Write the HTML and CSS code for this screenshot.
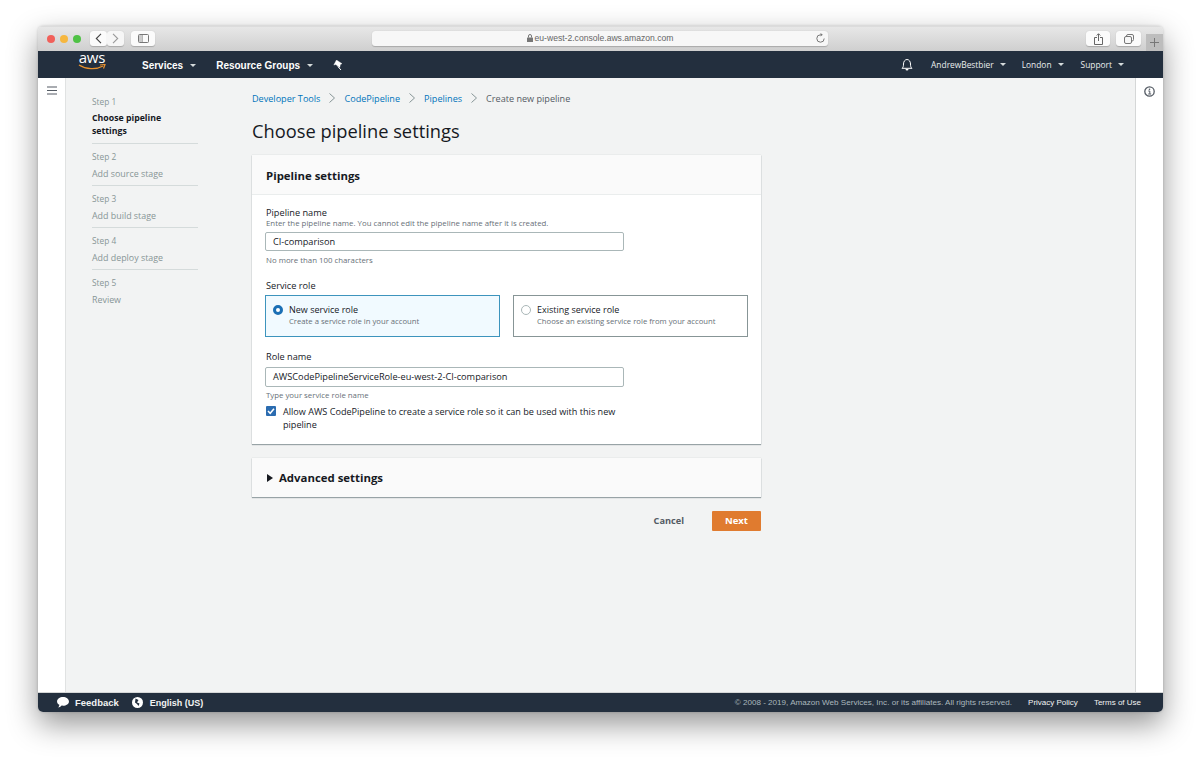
FILE: index.html
```html
<!DOCTYPE html>
<html lang="en">
<head>
<meta charset="utf-8">
<title>Choose pipeline settings</title>
<link rel="stylesheet" href="styles.css">
</head>
<body>
<div class="window">
  <header class="titlebar">
    <div class="lights"><i class="light red"></i><i class="light yellow"></i><i class="light green"></i></div>
    <div class="tb-group">
      <span class="tb-btn tb-half"><svg width="7" height="11" viewBox="0 0 7 11"><path d="M6 .8 1.300 5.500 6 10.200" fill="none" stroke="#444" stroke-width="1.100"/></svg></span>
      <span class="tb-btn tb-half dim"><svg width="7" height="11" viewBox="0 0 7 11"><path d="M1 .8l4.700 4.700L1 10.200" fill="none" stroke="#999" stroke-width="1.100"/></svg></span>
    </div>
    <span class="tb-btn tb-side"><svg width="11" height="9" viewBox="0 0 11 9"><rect x=".5" y=".5" width="10" height="8" rx="1" fill="none" stroke="#777"/><path d="M4 1v7" stroke="#777"/><path d="M1 1h3v7H1z" fill="#ccc"/></svg></span>
    <div class="urlbar">
      <span class="url"><svg class="lock" width="6" height="8" viewBox="0 0 6 8"><path d="M1.500 3.500V2a1.500 1.500 0 0 1 3 0v1.500" fill="none" stroke="#777"/><rect y="3.500" width="6" height="4.500" rx=".5" fill="#777"/></svg>eu-west-2.console.aws.amazon.com</span>
      <svg class="reload" width="9" height="10" viewBox="0 0 9 10"><path d="M4.500 1.800a3.700 3.700 0 1 0 3.700 3.700" fill="none" stroke="#777"/><path d="M4.500 0l2.300 1.800-2.300 1.800z" fill="#777"/></svg>
    </div>
    <span class="tb-btn tb-share"><svg width="9" height="12" viewBox="0 0 9 12"><path d="M3 4.500H.5v7h8v-7H6M4.500 8V1M2.700 2.500 4.500 .7l1.800 1.800" fill="none" stroke="#666"/></svg></span>
    <span class="tb-btn tb-tabs"><svg width="10" height="10" viewBox="0 0 10 10"><rect x="2.500" y=".5" width="7" height="6.500" rx="1.500" fill="none" stroke="#777"/><rect x=".5" y="2.500" width="7" height="7" rx="1.500" fill="#f7f7f7" stroke="#777"/></svg></span>
    <span class="tb-plus"><svg width="9" height="9" viewBox="0 0 9 9"><path d="M4.500 0v9M0 4.500h9" stroke="#777"/></svg></span>
  </header>

  <nav class="topnav">
    <a class="aws"><span class="aws-word">aws</span><svg class="aws-smile" width="28" height="7" viewBox="0 0 28 7"><path d="M1 1c7 4.500 17 5 24 1" fill="none" stroke="#e8912d" stroke-width="1.300"/><path d="M22 1l5-.5-1.500 4" fill="none" stroke="#e8912d" stroke-width="1.200"/></svg></a>
    <a class="nav-main nav-services">Services<i class="caret"></i></a>
    <a class="nav-main nav-groups">Resource Groups<i class="caret"></i></a>
    <svg class="pin" width="10" height="10" viewBox="0 0 10 10"><path d="M3.500 0 9 3.700l-1.700.7-.5 3L2.700 4.500.8 5z" fill="#fff" stroke="#fff" stroke-width=".4" stroke-linejoin="round"/><path d="M4.800 6.500 8 10" stroke="#fff"/></svg>
    <span class="spring"></span>
    <svg class="bell" width="12" height="13" viewBox="0 0 12 13"><path d="M1 10.300c1.300-1 1.500-2.300 1.500-4.300 0-2.500 1.500-4.500 3.500-4.500S9.500 3.500 9.500 6c0 2 .2 3.300 1.500 4.300z" fill="none" stroke="#fff" stroke-linejoin="round"/><path d="M4.500 11h3a1.500 1.500 0 0 1-3 0z" fill="#fff"/></svg>
    <a class="nav-sub nav-user">AndrewBestbier<i class="caret"></i></a>
    <a class="nav-sub nav-region">London<i class="caret"></i></a>
    <a class="nav-sub nav-support">Support<i class="caret"></i></a>
  </nav>

  <div class="body">
    <aside class="rail rail-left">
      <svg width="10" height="9" viewBox="0 0 10 9"><path d="M0 1h10M0 4.500h10M0 8h10" stroke="#545b64" stroke-width="1.200"/></svg>
    </aside>

    <ol class="steps">
      <li class="step"><small>Step 1</small><span class="step-name current">Choose pipeline settings</span></li>
      <li class="step"><small>Step 2</small><span class="step-name">Add source stage</span></li>
      <li class="step"><small>Step 3</small><span class="step-name">Add build stage</span></li>
      <li class="step"><small>Step 4</small><span class="step-name">Add deploy stage</span></li>
      <li class="step last"><small>Step 5</small><span class="step-name">Review</span></li>
    </ol>

    <main class="content">
      <div class="crumbs">
        <a>Developer Tools</a><svg class="sep" width="6" height="10" viewBox="0 0 6 10"><path d="M.5.5 5.500 5l-5 4.500" fill="none" stroke="#879596"/></svg>
        <a>CodePipeline</a><svg class="sep" width="6" height="10" viewBox="0 0 6 10"><path d="M.5.5 5.500 5l-5 4.500" fill="none" stroke="#879596"/></svg>
        <a>Pipelines</a><svg class="sep" width="6" height="10" viewBox="0 0 6 10"><path d="M.5.5 5.500 5l-5 4.500" fill="none" stroke="#879596"/></svg>
        <span>Create new pipeline</span>
      </div>
      <h1>Choose pipeline settings</h1>

      <section class="card">
        <h2 class="card-head">Pipeline settings</h2>
        <div class="card-body">
          <div class="label">Pipeline name</div>
          <div class="hint hint-top">Enter the pipeline name. You cannot edit the pipeline name after it is created.</div>
          <div class="input">CI-comparison</div>
          <div class="hint hint-below">No more than 100 characters</div>

          <div class="label label-role">Service role</div>
          <div class="tiles">
            <div class="tile selected">
              <i class="radio on"></i>
              <div><div class="tile-title">New service role</div><div class="tile-hint">Create a service role in your account</div></div>
            </div>
            <div class="tile">
              <i class="radio"></i>
              <div><div class="tile-title">Existing service role</div><div class="tile-hint">Choose an existing service role from your account</div></div>
            </div>
          </div>

          <div class="label label-name">Role name</div>
          <div class="input input-role">AWSCodePipelineServiceRole-eu-west-2-CI-comparison</div>
          <div class="hint hint-type">Type your service role name</div>
          <div class="check">
            <svg class="box" width="10" height="10" viewBox="0 0 10 10"><rect width="10" height="10" rx="1" fill="#2b6cb0"/><path d="M2 5l2.200 2.300L8 2.800" fill="none" stroke="#fff" stroke-width="1.500"/></svg>
            <span>Allow AWS CodePipeline to create a service role so it can be used with this new pipeline</span>
          </div>
        </div>
      </section>

      <section class="card card-adv">
        <svg class="tri" width="6" height="8" viewBox="0 0 6 8"><path d="M0 0l6 4-6 4z" fill="#16191f"/></svg>
        <h2>Advanced settings</h2>
      </section>

      <div class="actions">
        <a class="cancel">Cancel</a>
        <a class="next">Next</a>
      </div>
    </main>

    <aside class="rail rail-right">
      <svg width="11" height="11" viewBox="0 0 11 11"><circle cx="5.500" cy="5.500" r="4.700" fill="none" stroke="#545b64" stroke-width="1.300"/><path d="M4.300 5h1.500v2.800M4.200 8h3" fill="none" stroke="#545b64"/><circle cx="5.500" cy="3.200" r=".8" fill="#545b64"/></svg>
    </aside>
  </div>

  <footer class="foot">
    <svg class="foot-ic1" width="12" height="11" viewBox="0 0 13 12"><path d="M6.500 0C10 0 13 2 13 4.800S10 9.500 6.500 9.500c-.5 0-1 0-1.500-.1C4 10.800 2.500 11.500 1 11.500c1-.8 1.500-2 1.500-3C1 7.600 0 6.300 0 4.800 0 2 3 0 6.500 0z" fill="#fff"/></svg>
    <span class="foot-b">Feedback</span>
    <svg class="foot-ic2" width="11" height="11" viewBox="0 0 11 11"><circle cx="5.500" cy="5.500" r="5.500" fill="#fff"/><path d="M3.500 1.500 6.500 3 5 5.500l2.500 1L6.500 9 5 7 3 5.500z" fill="#232f3e"/></svg>
    <span class="foot-b foot-lang">English (US)</span>
    <span class="spring"></span>
    <span class="foot-copy">© 2008 - 2019, Amazon Web Services, Inc. or its affiliates. All rights reserved.</span>
    <span class="foot-link">Privacy Policy</span>
    <span class="foot-link last">Terms of Use</span>
  </footer>
</div>
</body>
</html>
```
FILE: styles.css
```css
* { box-sizing: border-box; }
html, body { margin: 0; height: 100%; background: #fff; overflow: hidden; }
body { padding: 26px 37px 50px 38px; font-family: "Open Sans", "Noto Sans", sans-serif; color: #16191f; }
a { color: inherit; text-decoration: none; }
h1, h2, ol { margin: 0; padding: 0; }

.window { height: 686px; display: flex; flex-direction: column; border-radius: 5px; overflow: hidden; box-shadow: 0 12px 30px rgba(0,0,0,.42), 0 0 3px rgba(0,0,0,.18); background: #f2f3f3; }
.titlebar { height: 25px; flex: none; display: flex; align-items: center; background: linear-gradient(#e8e8e8, #cfcfcf); padding-left: 9px; box-shadow: inset 0 1px 0 #dcdcdc; position: relative; }
.lights { display: flex; gap: 5px; }
.light { width: 8px; height: 8px; border-radius: 50%; }
.red { background: #f1605a; }
.yellow { background: #f6b73f; }
.green { background: #4fc245; }
.tb-group { display: flex; margin-left: 9px; }
.tb-btn { height: 15px; display: flex; align-items: center; justify-content: center; background: #fbfbfb; border-radius: 3px; box-shadow: 0 .5px 1px rgba(0,0,0,.2); }
.tb-half { width: 17px; }
.dim { background: #f6f6f6; }
.tb-side { width: 24px; margin-left: 7px; }
.urlbar { width: 456px; height: 15px; margin-left: 217px; background: #f7f7f7; border-radius: 3px; display: flex; align-items: center; position: relative; box-shadow: 0 .5px 1px rgba(0,0,0,.2); }
.url { flex: 1; text-align: center; font: 8.600px/15px "Liberation Sans", sans-serif; color: #666; }
.lock { margin-right: 2px; vertical-align: -1px; }
.reload { position: absolute; right: 3px; top: 2px; }
.tb-share { width: 24px; margin-left: 258px; }
.tb-tabs { width: 25px; margin-left: 6px; }
.tb-plus { position: absolute; right: 0; bottom: 0; width: 17px; height: 17px; background: #bdbdbd; display: flex; align-items: center; justify-content: center; }

.topnav { height: 27px; flex: none; background: #232f3e; display: flex; align-items: center; color: #fff; position: relative; }
.aws { width: 28px; margin-left: 40px; margin-top: -5px; display: flex; flex-direction: column; align-items: center; height: 24px; }
.aws-word { font: 15px/15px "Open Sans", sans-serif; letter-spacing: -.2px; }
.aws-smile { margin-top: -1px; }
.nav-main { font: bold 10px/12px "Liberation Sans", sans-serif; display: flex; align-items: center; white-space: nowrap; padding-top: 2px; }
.nav-services { margin-left: 36px; }
.nav-groups { margin-left: 20px; }
.caret { width: 0; height: 0; border: 3px solid transparent; border-top: 3.500px solid #d5dbdb; border-bottom: 0; margin-left: 7px; }
.pin { margin-left: 20px; }
.spring { flex: 1; }
.bell { margin-right: 18px; }
.nav-sub { font: 8.400px "Open Sans", sans-serif; display: flex; align-items: center; white-space: nowrap; color: #eaeded; }
.nav-sub .caret { margin-left: 6px; border-top-width: 3px; }
.nav-user { margin-right: 16px; }
.nav-region { margin-right: 17px; }
.nav-support { margin-right: 39px; }

.body { flex: 1; min-height: 0; display: flex; }
.rail { flex: none; background: #fff; display: flex; justify-content: center; }
.rail-left { width: 28px; border-right: 1px solid #e0e2e2; padding-top: 8px; }
.rail-right { width: 28px; border-left: 1px solid #d5d7d7; padding-top: 8px; }
.rail svg { display: block; }

.steps { list-style: none; width: 186px; flex: none; padding: 16.500px 0 0 26px; }
.step { width: 106px; border-bottom: 1px solid #d5dbdb; padding-bottom: 4px; margin-bottom: 6.500px; }
.step.last { border: 0; }
.step small { display: block; font-size: 8.300px; line-height: 13px; color: #879596; }
.step-name { display: block; margin-top: 4px; font-size: 8.900px; line-height: 13.500px; color: #879596; }
.step-name.current { color: #16191f; font-weight: 700; font-size: 8.750px; }

.content { flex: 1; min-width: 0; padding-top: 14px; }
.crumbs { display: flex; align-items: center; height: 12px; font-size: 9.100px; color: #545b64; white-space: nowrap; }
.crumbs a { color: #0073bb; }
.sep { margin: 0 9px 0 9px; }
h1 { font-size: 18.300px; font-weight: 400; line-height: 26px; margin-top: 14px; }

.card { width: 509px; background: #fff; box-shadow: 0 1px 1px rgba(0,28,36,.35), 0 0 1px rgba(0,28,36,.2); margin-top: 11px; }
.card-head { height: 40px; background: #fafafa; border-bottom: 1px solid #eaeded; padding: 0 14px; font-size: 11.400px; font-weight: 700; line-height: 41px; }
.card-body { height: 249px; padding: 11.500px 13px 0; }
.label { font-size: 9.200px; line-height: 11px; color: #16191f; padding-left: 1px; }
.hint { font-size: 7.830px; line-height: 11px; color: #687078; padding-left: 1px; }
.hint-top { padding-top: .5px; }
.input { width: 359px; height: 19px; margin-top: 3px; background: #fff; border: 1px solid #aab7b8; border-radius: 2px; padding: 0 7px; font-size: 9.200px; line-height: 17px; color: #16191f; }
.hint-below { margin-top: 3.500px; }
.label-role { margin-top: 14.500px; }
.tiles { display: flex; gap: 13px; margin-top: 4px; }
.tile { width: 235px; height: 42px; border: 1px solid #879596; display: flex; gap: 6px; padding: 8px 7px; }
.tile.selected { background: #f1faff; border-color: #3d94bd; }
.tile-title { font-size: 9px; line-height: 12px; }
.tile-hint { font-size: 7.700px; line-height: 11px; color: #687078; }
.radio { flex: none; width: 10px; height: 10px; border-radius: 50%; border: 1px solid #aab7b8; background: #fff; margin-top: 1px; }
.radio.on { border: 3px solid #1a6fb5; }
.label-name { margin-top: 14px; }
.input-role { margin-top: 5px; height: 20px; line-height: 18px; }
.hint-type { margin-top: 3px; }
.check { display: flex; gap: 7px; width: 359px; margin-top: 3.500px; padding-left: 1px; font-size: 9.100px; line-height: 13px; }
.box { flex: none; margin-top: 1px; }

.card-adv { margin-top: 14px; height: 39px; background: #fafafa; display: flex; align-items: center; padding-left: 15px; gap: 6px; }
.card-adv h2 { font-size: 11.400px; font-weight: 700; }

.actions { width: 509px; display: flex; justify-content: flex-end; align-items: center; margin-top: 14px; gap: 28px; font-size: 9.500px; font-weight: 700; }
.cancel { color: #545b64; font-size: 9.200px; line-height: 19px; height: 20px; }
.next { width: 49px; height: 20px; background: #e07b2f; color: #fff; text-align: center; line-height: 20px; border-radius: 1px; }

.foot { height: 20px; flex: none; background: #232f3e; display: flex; align-items: center; color: #fff; font-family: "Liberation Sans", sans-serif; border-top: 1px solid #d5d7d7; }
.foot-ic1 { margin-left: 19px; }
.foot-b { font-size: 9.500px; font-weight: 700; color: #f2f3f3; margin-left: 6px; }
.foot-ic2 { margin-left: 13px; }
.foot-lang { margin-left: 7px; font-size: 9px; }
.foot-copy { font-size: 8.100px; color: #aab7bd; }
.foot-link { font-size: 8px; margin-left: 16px; color: #f2f3f3; }
.foot-link.last { margin-right: 22px; }
```
